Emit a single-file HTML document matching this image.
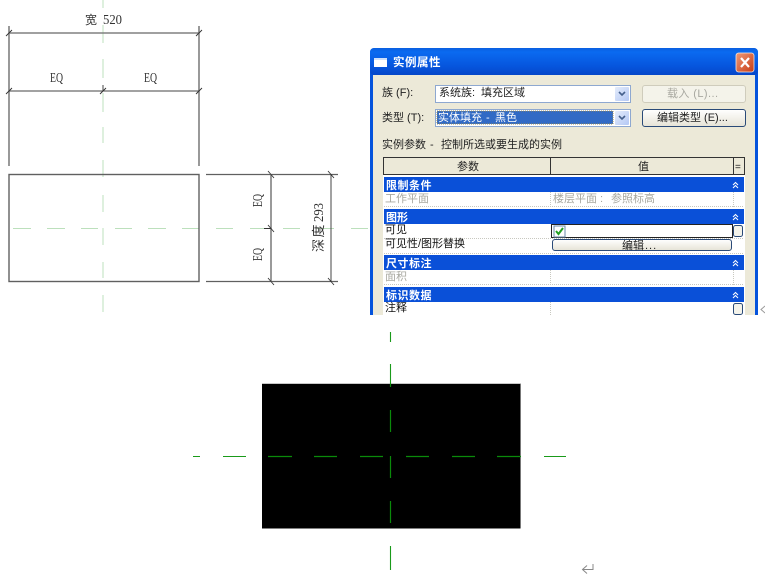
<!DOCTYPE html>
<html><head><meta charset="utf-8"><style>
html,body{margin:0;padding:0;background:#fff;width:765px;height:576px;overflow:hidden}
svg{display:block;filter:blur(.3px)}
text{font-family:"Liberation Sans","WenQuanYi Zen Hei","Noto Sans CJK SC",sans-serif;font-size:11px;fill:#222}
.d{font-family:"Liberation Serif","WenQuanYi Zen Hei",serif;fill:#333;font-size:12px}
.e{font-size:14px}
.w{fill:#fff;font-weight:bold}
.g{fill:#a8a8a0}
</style></head><body>
<svg width="765" height="576" viewBox="0 0 765 576" xmlns="http://www.w3.org/2000/svg">
<defs>
<linearGradient id="tb" x1="0" y1="0" x2="0" y2="1"><stop offset="0" stop-color="#0a5fe0"/><stop offset=".15" stop-color="#0a6af0"/><stop offset=".7" stop-color="#0654dc"/><stop offset="1" stop-color="#0546c8"/></linearGradient>
<linearGradient id="cl" x1="0" y1="0" x2="1" y2="1"><stop offset="0" stop-color="#ee9a78"/><stop offset="1" stop-color="#c83c14"/></linearGradient>
<linearGradient id="ar" x1="0" y1="0" x2="1" y2="1"><stop offset="0" stop-color="#e4ecfb"/><stop offset="1" stop-color="#b4c8f4"/></linearGradient>
<linearGradient id="bt" x1="0" y1="0" x2="0" y2="1"><stop offset="0" stop-color="#fff"/><stop offset="1" stop-color="#e6e3d6"/></linearGradient>
</defs>

<!-- light green center lines -->
<path d="M103 0V8M103 25V43M103 59V78M103 93V112M103 127V143M103 160V177M103 195V212M103 228V245M103 262V278M103 295V312" stroke="#bce0bc" stroke-width="1" fill="none"/>
<path d="M13 228.500H31M47 228.500H65M81 228.500H98M115 228.500H132M148 228.500H166M182 228.500H199M216 228.500H233M250 228.500H267M283 228.500H300M317 228.500H334M351 228.500H368" stroke="#bce0bc" stroke-width="1" fill="none"/>

<!-- plan lines -->
<g stroke="#808080" fill="none">
<path d="M9 26V166M199 26V166" stroke-width="1.600"/>
<path d="M9 33H199" stroke-width="1.500"/>
<path d="M9 91H199" stroke="#444" stroke-width="1"/>
<rect x="9" y="174.500" width="190" height="107" stroke="#606060" stroke-width="1.400"/>
<path d="M206 174.500H338M206 281.500H338" stroke="#606060" stroke-width="1.200"/>
<path d="M271 174V282" stroke-width="1.600"/>
<path d="M331 174V282" stroke="#444"/>
</g>
<!-- ticks -->
<g stroke="#333" stroke-width=".9" fill="none">
<path d="M6 36L12 30M196 36L202 30M6 94L12 88M100 94L106 88M196 94L202 88M103 85V91"/>
<path d="M268 171L274 178M328 171L334 178M268 278L274 285M328 278L334 285M268 225L274 232M264 228.500H271"/>
</g>
<text class="d" x="85" y="24">宽</text><text class="d e" x="103" y="24" textLength="19" lengthAdjust="spacingAndGlyphs">520</text>
<text class="d e" x="50" y="82" textLength="13" lengthAdjust="spacingAndGlyphs">EQ</text>
<text class="d e" x="144" y="82" textLength="13" lengthAdjust="spacingAndGlyphs">EQ</text>
<text class="d e" transform="translate(262,207) rotate(-90)" textLength="13" lengthAdjust="spacingAndGlyphs">EQ</text>
<text class="d e" transform="translate(262,261) rotate(-90)" textLength="13" lengthAdjust="spacingAndGlyphs">EQ</text>
<text class="d" transform="translate(323,252) rotate(-90)" style="font-size:13px;letter-spacing:1.500px">深度</text>
<text class="d e" transform="translate(323,222) rotate(-90)" textLength="19" lengthAdjust="spacingAndGlyphs">293</text>

<!-- dialog -->
<path d="M370 315V53Q370 48 375 48H753Q758 48 758 53V315Z" fill="#0553dc"/>
<rect x="370" y="48" width="388" height="27" rx="4" fill="url(#tb)"/>
<rect x="373" y="75" width="382" height="240" fill="#ece9d8"/>
<rect x="374" y="58" width="13" height="9" fill="#fff"/>
<rect x="374" y="58" width="13" height="2" fill="#cfe0fa"/>
<text class="w" x="393" y="66" style="font-size:11.500px;letter-spacing:.5px">实例属性</text>
<rect x="736" y="53" width="18" height="19" rx="2.500" fill="url(#cl)" stroke="#f4e8e0" stroke-width=".8"/>
<path d="M741 58L749 67M749 58L741 67" stroke="#fff" stroke-width="2.200" fill="none"/>

<text x="382" y="96">族 (F):</text>
<text x="382" y="121">类型 (T):</text>
<rect x="435.500" y="85.500" width="195" height="17" fill="#fff" stroke="#8ea8d0"/>
<text x="439" y="96">系统族:</text><text x="481" y="96">填充区域</text>
<rect x="615" y="87" width="14" height="14" rx="1" fill="url(#ar)"/>
<path d="M619 92L622 95L625 92" stroke="#44608c" stroke-width="1.600" fill="none"/>
<rect x="435.500" y="109.500" width="195" height="17" fill="#fff" stroke="#8ea8d0"/>
<rect x="437" y="111" width="176" height="13" fill="#316ac5" stroke="#9a8a50" stroke-dasharray="1 1"/>
<text x="438" y="121" style="fill:#fff">实体填充</text><text x="486" y="121" style="fill:#fff">-</text><text x="495" y="121" style="fill:#fff">黑色</text>
<rect x="615" y="111" width="14" height="14" rx="1" fill="url(#ar)"/>
<path d="M619 116L622 119L625 116" stroke="#44608c" stroke-width="1.600" fill="none"/>

<rect x="642.500" y="85.500" width="103" height="17" rx="2.500" fill="#f4f3ea" stroke="#cfccbc"/>
<text class="g" x="667" y="97" textLength="51">载入 (L)...</text>
<rect x="642.500" y="109.500" width="103" height="17" rx="2.500" fill="url(#bt)" stroke="#2a4a78"/>
<text x="657" y="121">编辑类型 (E)...</text>

<text x="382" y="148">实例参数</text><text x="430" y="148">-</text><text x="441" y="148">控制所选或要生成的实例</text>

<!-- table -->
<rect x="383" y="157" width="362" height="158" fill="#fff"/>
<rect x="383.500" y="157.500" width="361" height="17" fill="#ece9d8" stroke="#333"/>
<path d="M550.500 157V174M733.500 157V174" stroke="#333"/>
<text x="457" y="170">参数</text>
<text x="638" y="170">值</text>
<text x="735" y="170" style="font-size:10px">=</text>

<g fill="#0a50d8">
<rect x="384" y="177" width="360" height="15"/>
<rect x="384" y="209" width="360" height="15"/>
<rect x="384" y="255" width="360" height="15"/>
<rect x="384" y="287" width="360" height="15"/>
</g>
<g stroke="#c8c8c0" stroke-dasharray="1 1" fill="none">
<path d="M384 206.500H744M384 238.500H744M384 253.500H744M384 284.500H744"/>
<path d="M550.500 192V207M550.500 270V285M550.500 302V315M733.500 192V207M733.500 270V285"/>
</g>
<text class="w" x="386" y="189" style="letter-spacing:.5px">限制条件</text>
<text class="w" x="386" y="221">图形</text>
<text class="w" x="386" y="267" style="letter-spacing:.5px">尺寸标注</text>
<text class="w" x="386" y="299" style="letter-spacing:.5px">标识数据</text>
<g stroke="#fff" stroke-width="1" fill="none">
<path d="M733 185L735.500 182.500L738 185M733 188L735.500 185.500L738 188"/>
<path d="M733 217L735.500 214.500L738 217M733 220L735.500 217.500L738 220"/>
<path d="M733 263L735.500 260.500L738 263M733 266L735.500 263.500L738 266"/>
<path d="M733 295L735.500 292.500L738 295M733 298L735.500 295.500L738 298"/>
</g>
<text class="g" x="385" y="202">工作平面</text>
<text class="g" x="553" y="202">楼层平面</text><text class="g" x="600" y="202">:</text><text class="g" x="611" y="202">参照标高</text>
<text x="385" y="233" style="fill:#111">可见</text>
<text x="385" y="247" style="fill:#111">可见性/图形替换</text>
<text class="g" x="385" y="280">面积</text>
<text x="385" y="311" style="fill:#111">注释</text>

<rect x="551.500" y="224.500" width="181" height="13" fill="#fff" stroke="#222"/>
<rect x="554" y="226" width="11" height="11" fill="#fff" stroke="#6a88a8"/>
<path d="M556 231L558.500 234L563 228" stroke="#22a022" stroke-width="2" fill="none"/>
<rect x="733.500" y="225.500" width="9" height="11" rx="2" fill="#f4f3ea" stroke="#2a4a78"/>
<rect x="552.500" y="239.500" width="179" height="11" rx="2.500" fill="url(#bt)" stroke="#2a4a78"/>
<text x="622" y="249">编辑</text><text x="645" y="249" style="letter-spacing:1px">...</text>
<rect x="733.500" y="303.500" width="9" height="11" rx="2" fill="#f4f3ea" stroke="#2a4a78"/>

<!-- return arrow top -->
<path d="M765 306L761 309.500L765 313" stroke="#999" fill="none"/>

<!-- black rect -->
<rect x="262" y="384" width="258.500" height="144.500" fill="#000"/>
<path d="M262 383.500H521" stroke="#c8c8c8"/>
<path d="M520.500 384V528" stroke="#777"/>

<!-- dark green center lines -->
<g stroke="#1a9a1a" stroke-width="1.100" fill="none">
<path d="M390.500 332V342M390.500 364V384M390.500 546V570"/>
<path d="M193 456.500H200M223 456.500H246M544 456.500H566"/>
</g>
<g stroke="#0a8a0a" stroke-width="1.200" fill="none">
<path d="M390.500 384V387M390.500 410V432M390.500 456V478M390.500 501V523"/>
<path d="M268 456.500H292M314 456.500H337M360 456.500H383M406 456.500H429M452 456.500H475M497 456.500H521"/>
</g>

<!-- return arrow bottom -->
<path d="M593 564V569.500H583M587 565.500L582.500 569.500L587 573.500" stroke="#888" fill="none"/>
</svg>
</body></html>
